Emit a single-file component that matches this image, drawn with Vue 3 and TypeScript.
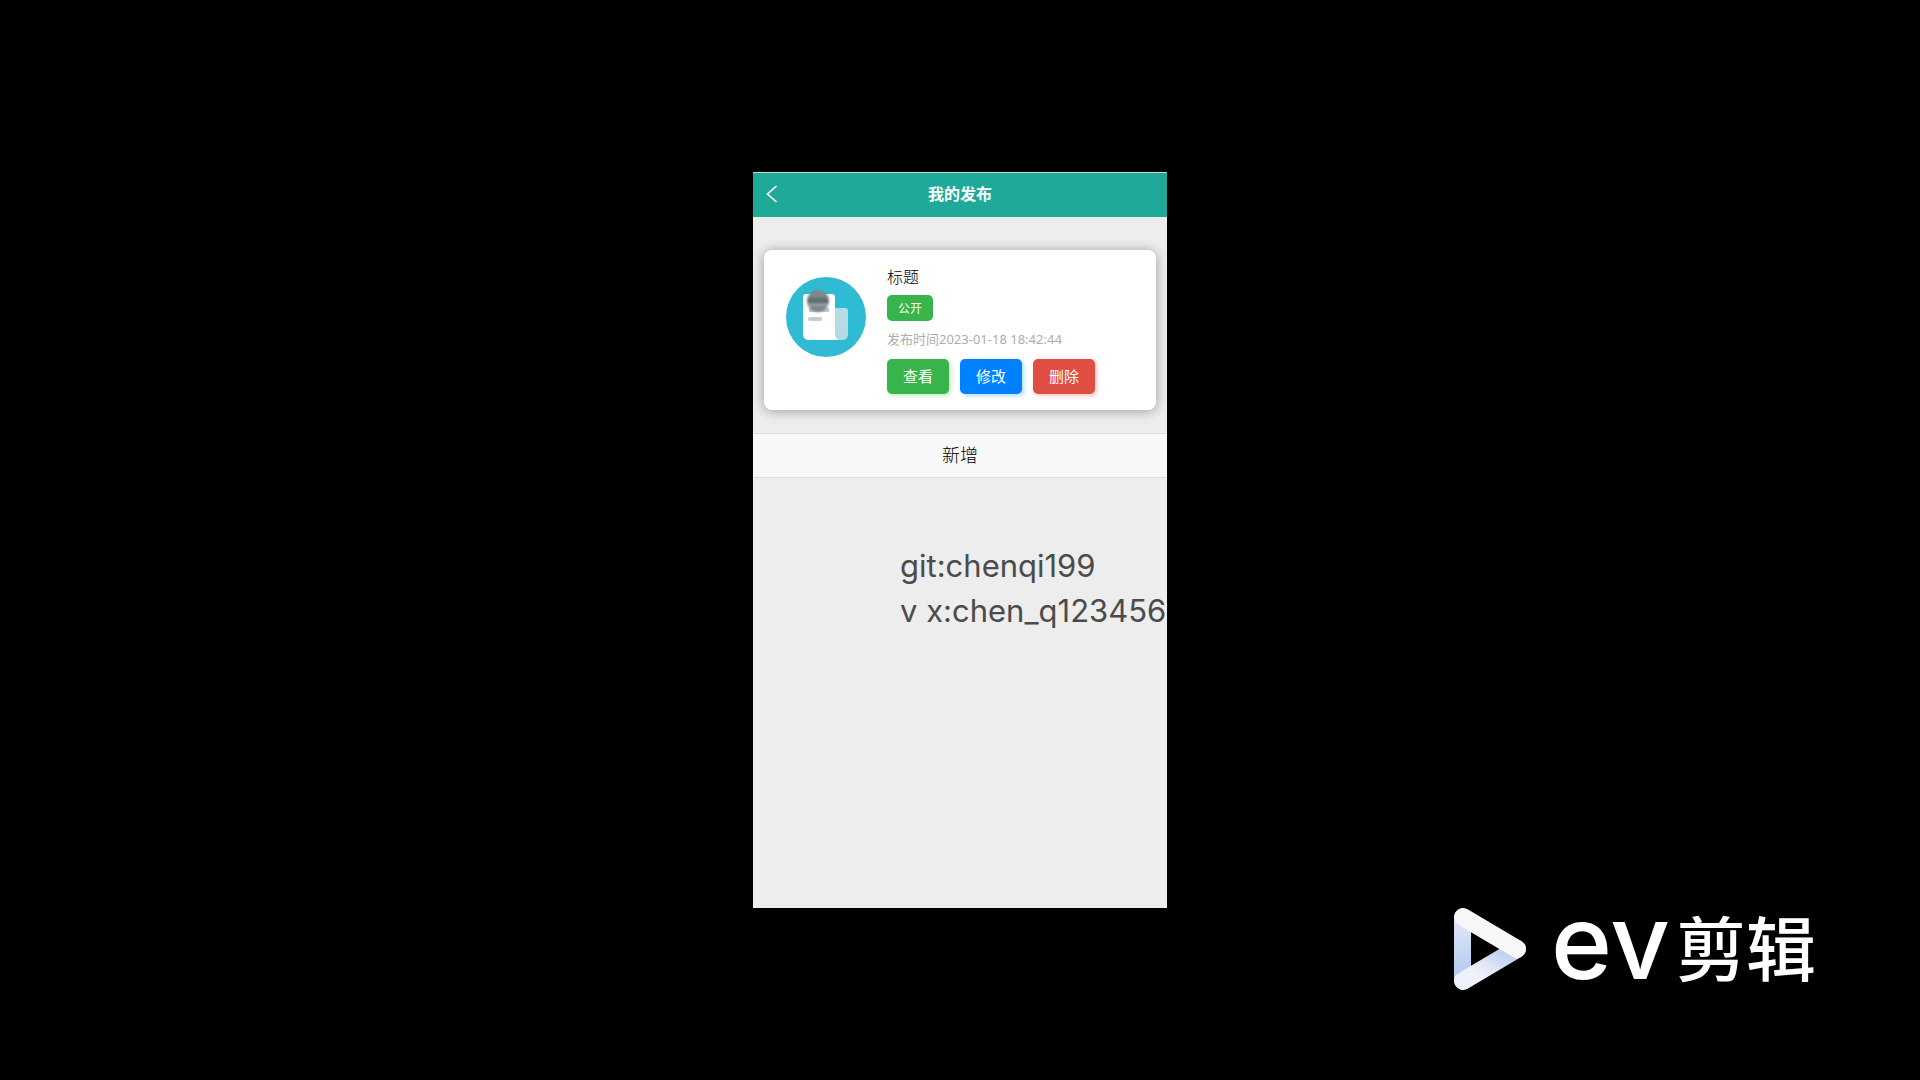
<script setup lang="ts">
interface Post {
  title: string
  status: string
  time: string
}

interface Action {
  label: string
  kind: 'view' | 'edit' | 'remove'
}

const posts: Post[] = [{ title: '标题', status: '公开', time: '2023-01-18 18:42:44' }]

const actions: Action[] = [
  { label: '查看', kind: 'view' },
  { label: '修改', kind: 'edit' },
  { label: '删除', kind: 'remove' },
]
</script>

<template>
  <div class="stage">
    <main class="phone">
      <header class="bar">
        <button class="back" type="button" aria-label="返回">
          <svg width="12" height="18" viewBox="0 0 12 18" fill="none" stroke="currentColor" stroke-width="1.6">
            <path d="M10.5 1 1.5 9l9 8" />
          </svg>
        </button>
        <h1>我的发布</h1>
      </header>

      <section class="list">
        <article v-for="post in posts" :key="post.time" class="card">
          <svg class="avatar" width="80" height="80" viewBox="0 0 80 80">
            <defs>
              <filter id="soft" x="-20%" y="-20%" width="140%" height="140%">
                <feGaussianBlur stdDeviation="1" />
              </filter>
            </defs>
            <circle cx="40" cy="40" r="40" fill="#2fbbd4" />
            <path d="M47 31h12q3 0 3 3v23q0 6-6 6h-3q-6 0-6-6z" fill="#b5dce4" />
            <path d="M20 17h26q3 0 3 3v37q0 5 4 6H23q-6 0-6-6V20q0-3 3-3z" fill="#fff" />
            <path d="M23 31h20v4H23z" fill="#bcc8cd" />
            <rect x="22" y="40" width="14" height="4" rx="2" fill="#c3cdd2" />
            <g filter="url(#soft)">
              <circle cx="32" cy="24" r="11" fill="#7c868b" />
              <path d="M22 21h20v5H22z" fill="#646e73" />
              <path d="M22 28h20" stroke="#98a1a6" stroke-width="2" />
            </g>
          </svg>
          <div class="info">
            <h2>{{ post.title }}</h2>
            <span class="badge">{{ post.status }}</span>
            <p class="time">发布时间{{ post.time }}</p>
            <div class="actions">
              <button v-for="a in actions" :key="a.kind" type="button" :class="['action', a.kind]">
                {{ a.label }}
              </button>
            </div>
          </div>
        </article>
      </section>

      <button class="add" type="button">新增</button>

      <p class="contact">git:chenqi199<br />v x:chen_q123456</p>
    </main>

    <div class="brand">
      <svg width="74" height="82" viewBox="0 0 74 82">
        <defs>
          <linearGradient id="side" x1="0" y1="0" x2="0" y2="1">
            <stop offset="0.2" stop-color="#d9e2f8" />
            <stop offset="0.8" stop-color="#b8cdf3" />
          </linearGradient>
          <linearGradient id="under" x1="1" y1="0" x2="0" y2="1">
            <stop offset="0.1" stop-color="#b9ccf2" />
            <stop offset="0.75" stop-color="#f0f2fb" />
          </linearGradient>
        </defs>
        <path d="M1 9h17v64H1z" fill="url(#side)" />
        <path d="M10 73 64 41" stroke="url(#under)" stroke-width="18" stroke-linecap="round" />
        <path d="M10 9 64 41" stroke="#f7f7f8" stroke-width="18" stroke-linecap="round" />
      </svg>
      <span class="latin">ev</span>
      <span class="han">剪辑</span>
    </div>
  </div>
</template>

<style>
body {
  margin: 0;
  background: #000;
}
</style>

<style scoped>
.stage {
  position: relative;
  display: flex;
  align-items: center;
  justify-content: center;
  min-height: 100vh;
  background: #000;
  font-family: "Noto Sans", "Noto Sans CJK SC", sans-serif;
}

h1,
h2,
p {
  margin: 0;
  font-weight: 400;
}

button {
  margin: 0;
  padding: 0;
  border: 0;
  font-family: inherit;
  cursor: pointer;
}

.phone {
  box-sizing: border-box;
  width: 100%;
  max-width: 414px;
  min-height: 736px;
  border-top: 1px solid #b5e0d9;
  background: #ededed;
}

.bar {
  display: grid;
  grid-template-columns: 40px 1fr 40px;
  align-items: center;
  height: 44px;
  background: #1fa998;
  color: #fff;
}

.back {
  display: flex;
  align-items: center;
  height: 44px;
  padding-left: 13px;
  padding-bottom: 2px;
  background: none;
  color: #fff;
}

h1 {
  padding-bottom: 2px;
  font-size: 16px;
  font-weight: 700;
  line-height: 42px;
  text-align: center;
}

.list {
  padding: 33px 11px 23px;
}

.card {
  display: flex;
  gap: 21px;
  box-sizing: border-box;
  min-height: 160px;
  padding: 15px 22px;
  border-radius: 8px;
  background: #fff;
  box-shadow: 0 1px 12px rgba(0, 0, 0, 0.35);
}

.avatar {
  flex: none;
  margin-top: 12px;
}

.info {
  flex: 1;
}

h2 {
  color: #000;
  font-size: 16px;
  font-weight: 300;
  line-height: 24px;
}

.badge {
  display: block;
  box-sizing: border-box;
  width: 46px;
  height: 26px;
  margin-top: 6px;
  padding-top: 2px;
  border-radius: 5px;
  background: #37b44a;
  color: #fff;
  font-size: 12px;
  line-height: 24px;
  text-align: center;
}

.time {
  margin-top: 8px;
  color: #adadad;
  font-size: 13px;
  line-height: 20px;
}

.actions {
  display: flex;
  gap: 11px;
  margin-top: 10px;
}

.action {
  width: 62px;
  height: 35px;
  padding-bottom: 2px;
  border-radius: 5px;
  color: #fff;
  font-size: 15px;
}

.view {
  background: #37b44a;
  box-shadow: 2px 2px 4px rgba(55, 180, 74, 0.3);
}

.edit {
  background: #0081ff;
  box-shadow: 2px 2px 4px rgba(0, 129, 255, 0.3);
}

.remove {
  background: #e04d43;
  box-shadow: 2px 2px 4px rgba(224, 77, 67, 0.3);
}

.add {
  display: block;
  box-sizing: border-box;
  width: 100%;
  height: 45px;
  padding-bottom: 3px;
  border: 1px solid #dedede;
  border-width: 1px 0;
  background: #f8f8f8;
  color: #000;
  font-size: 18px;
  font-weight: 300;
}

.contact {
  padding: 65px 0 0 147px;
  color: #4b4b4b;
  font-family: Inter, sans-serif;
  font-size: 31px;
  line-height: 45px;
  white-space: nowrap;
}

.brand {
  position: absolute;
  right: 104px;
  bottom: 90px;
  display: flex;
  align-items: center;
  height: 82px;
  color: #fff;
}

.latin {
  margin-left: 24px;
  padding-bottom: 16px;
  font-family: Inter, sans-serif;
  font-size: 104px;
  font-weight: 500;
  line-height: 82px;
}

.han {
  margin-left: 6px;
  padding-bottom: 6px;
  font-family: "Noto Sans CJK SC", sans-serif;
  font-size: 70px;
  font-weight: 500;
  line-height: 82px;
}
</style>
